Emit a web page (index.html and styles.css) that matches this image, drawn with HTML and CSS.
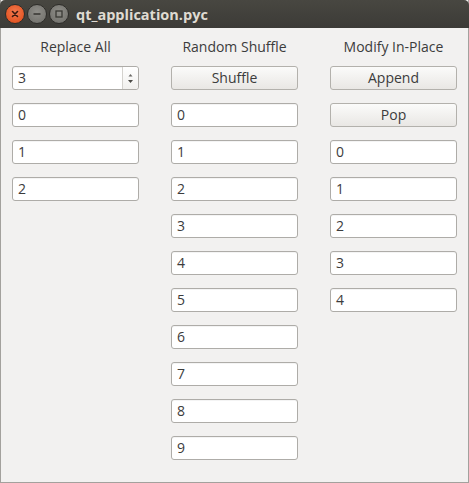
FILE: index.html
```html
<!DOCTYPE html>
<html>
<head>
<meta charset="utf-8">
<link rel="stylesheet" href="styles.css">
</head>
<body>
<div class="window">
  <div class="titlebar">
    <div class="controls">
      <span class="wbtn close">
        <svg width="10" height="10" viewBox="0 0 10 10"><path d="M2.5 2.5 L7.5 7.5 M7.5 2.5 L2.5 7.5" stroke="#3a1a10" stroke-width="1.6" stroke-linecap="round"/></svg>
      </span>
      <span class="wbtn">
        <svg width="10" height="10" viewBox="0 0 10 10"><path d="M1.5 5 H8.5" stroke="#3a3935" stroke-width="1.6"/></svg>
      </span>
      <span class="wbtn">
        <svg width="10" height="10" viewBox="0 0 10 10"><rect x="2" y="2" width="6" height="6" fill="none" stroke="#3a3935" stroke-width="1.3"/></svg>
      </span>
    </div>
    <div class="title">qt_application.pyc</div>
  </div>
  <div class="content">
    <div class="col">
      <div class="label">Replace All</div>
      <div class="spin">
        <span class="val">3</span>
        <span class="arrows">
          <svg width="7" height="16" viewBox="0 0 7 16"><path d="M3.5 4 L5.5 6.5 H1.5 Z" fill="#6a6965"/><path d="M1 10 H6 L3.5 13 Z" fill="#4a4945"/></svg>
        </span>
      </div>
      <div class="edit">0</div>
      <div class="edit">1</div>
      <div class="edit">2</div>
    </div>
    <div class="col">
      <div class="label">Random Shuffle</div>
      <div class="btn">Shuffle</div>
      <div class="edit">0</div>
      <div class="edit">1</div>
      <div class="edit">2</div>
      <div class="edit">3</div>
      <div class="edit">4</div>
      <div class="edit">5</div>
      <div class="edit">6</div>
      <div class="edit">7</div>
      <div class="edit">8</div>
      <div class="edit">9</div>
    </div>
    <div class="col">
      <div class="label">Modify In-Place</div>
      <div class="btn">Append</div>
      <div class="btn">Pop</div>
      <div class="edit">0</div>
      <div class="edit">1</div>
      <div class="edit">2</div>
      <div class="edit">3</div>
      <div class="edit">4</div>
    </div>
  </div>
</div>
</body>
</html>
```
FILE: styles.css
```css
html, body {
  margin: 0;
  padding: 0;
  background: #f2f1f0;
}
.window {
  width: 469px;
  height: 483px;
  box-sizing: border-box;
  border: 1px solid #a3a19d;
  border-top: none;
  background: #f2f1f0;
  display: flex;
  flex-direction: column;
  font-family: "Open Sans", "DejaVu Sans", sans-serif;
  font-size: 14px;
  color: #3c3c3c;
}
.titlebar {
  height: 28px;
  margin: 0 -1px;
  background: linear-gradient(#484741, #3c3b37);
  border-radius: 5px 5px 0 0;
  display: flex;
  align-items: center;
  flex: none;
}
.controls {
  display: flex;
  gap: 2px;
  padding-left: 5px;
}
.wbtn {
  width: 18px;
  height: 18px;
  border-radius: 50%;
  background: radial-gradient(circle at 50% 40%, #8f8e89, #6d6c67);
  border: 1px solid #2e2d2a;
  display: flex;
  align-items: center;
  justify-content: center;
}
.wbtn.close {
  background: radial-gradient(circle at 50% 40%, #f47a4f, #dd4814);
}
.title {
  margin-left: 7px;
  font-weight: bold;
  font-size: 14.5px;
  color: #dfdbd2;
}
.content {
  display: flex;
  gap: 32px;
  padding: 10px 11px 0 11px;
}
.col {
  width: 127px;
  display: flex;
  flex-direction: column;
  gap: 13px;
}
.label {
  height: 18px;
  line-height: 18px;
  text-align: center;
  margin-bottom: -3px;
}
.edit, .spin {
  height: 24px;
  box-sizing: border-box;
  border: 1px solid #aeaca8;
  border-radius: 3px;
  background: #ffffff;
  line-height: 22px;
  padding-left: 5px;
  box-shadow: inset 0 1px 0 #f4f4f4;
}
.spin {
  display: flex;
  justify-content: space-between;
  padding-right: 0;
}
.arrows {
  width: 15px;
  border-left: 1px solid #d4d2ce;
  display: flex;
  align-items: center;
  justify-content: center;
  background: linear-gradient(#ffffff, #f1f0ee);
  border-radius: 0 3px 3px 0;
}
.btn {
  height: 24px;
  box-sizing: border-box;
  border: 1px solid #b3b1ac;
  border-radius: 3px;
  background: linear-gradient(#fbfbfa, #e9e7e4);
  text-align: center;
  line-height: 22px;
}
```
